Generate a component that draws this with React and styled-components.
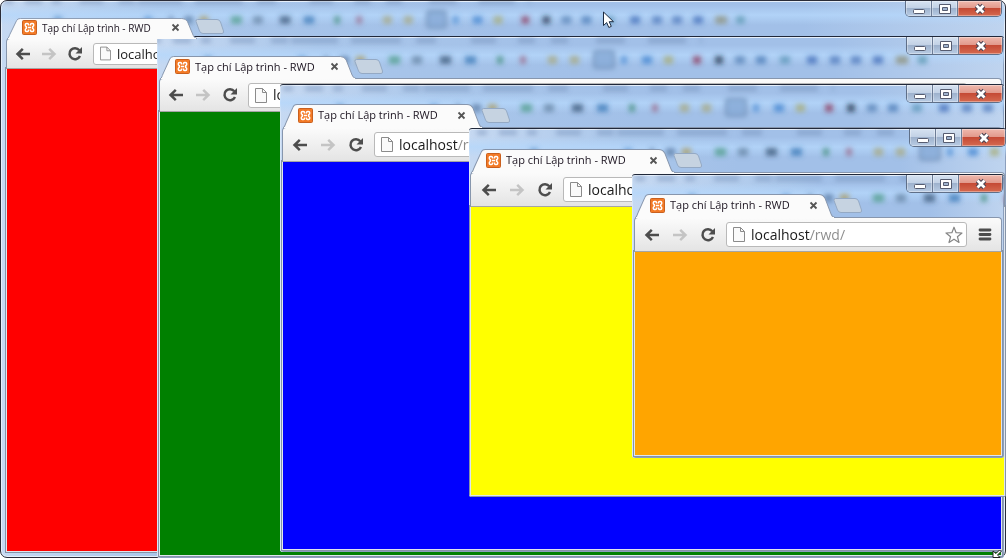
import React from 'react';
import styled, { createGlobalStyle, css } from 'styled-components';

const GlobalStyle = createGlobalStyle`
  * {
    box-sizing: border-box;
  }
  body {
    margin: 0;
    background: #fff;
    font-family: "Open Sans", "Noto Sans", sans-serif;
  }
`;

const sizes = {
  small: { strip: 37, toolbar: 31, tab: 190, tabHeight: 21, inset: 7, gap: 8, title: 10, address: 13, host: 55, field: 22, icon: 11 },
  medium: { strip: 41, toolbar: 34, tab: 196, tabHeight: 23, inset: 7, gap: 9, title: 11, address: 14, host: 59, field: 25, icon: 12 },
  normal: { strip: 42, toolbar: 35, tab: 200, tabHeight: 24, inset: 8, gap: 10, title: 11, address: 14, host: 59, field: 25, icon: 12 },
  large: { strip: 43, toolbar: 35, tab: 204, tabHeight: 24, inset: 9, gap: 10, title: 11, address: 14, host: 59, field: 25, icon: 12 },
};

const Desktop = styled.main`
  position: relative;
  min-height: 100vh;
  overflow: hidden;
`;

const Frame = styled.section`
  position: absolute;
  left: ${(props) => props.$left}px;
  top: ${(props) => props.$top}px;
  right: ${(props) => props.$right}px;
  bottom: ${(props) => props.$bottom}px;
  display: flex;
  flex-direction: column;
  padding: 0 ${(props) => props.$edge}px ${(props) => props.$edge}px;
  overflow: hidden;
  background: linear-gradient(90deg, #c6d9f2 0, #a9c6ea 160px, #a2c0e8 50%, #a2c0e8 80%, #bfd4ef 100%);
  border-top: 1px solid #20283a;
  border-radius: 3px;
  box-shadow: inset 0 1px #e6effa, inset 1px 0 #d8e6f7, inset -1px -1px #8c9fbd;
  ${(props) => props.$main && css`
    border: 1px solid #2a2c38;
    border-radius: 7px;
    box-shadow: inset 0 0 0 1px #e6effa;
  `}
`;

const Haze = styled.svg`
  position: absolute;
  left: 0;
  top: 0;
  width: 100%;
  height: 42px;
`;

const TitleStrip = styled.header`
  position: relative;
  display: flex;
  align-items: flex-end;
  flex: none;
  height: ${(props) => props.$size.strip}px;
`;

const Tab = styled.div`
  position: relative;
  display: flex;
  align-items: center;
  gap: 5px;
  width: ${(props) => props.$size.tab}px;
  height: ${(props) => props.$size.tabHeight}px;
  padding: 0 17px 2px 15px;
  margin-bottom: -1px;
  z-index: 1;
`;

const TabShape = styled.svg`
  position: absolute;
  left: 0;
  top: 0;
  width: 100%;
  height: 100%;
`;

const Favicon = styled.svg`
  position: relative;
  flex: none;
  width: 15px;
  height: 15px;
`;

const TabTitle = styled.span`
  position: relative;
  flex: 1;
  color: #1c1420;
  font-size: ${(props) => props.$size.title}px;
  line-height: 16px;
  white-space: nowrap;
`;

const IconButton = styled.button`
  position: relative;
  display: flex;
  align-items: center;
  justify-content: center;
  flex: none;
  width: ${(props) => props.$size}px;
  height: ${(props) => props.$size}px;
  padding: 0;
  border: 0;
  background: none;
`;

const NewTab = styled.button`
  position: relative;
  width: 30px;
  height: 15px;
  padding: 0;
  margin: 0 0 4px -2px;
  border: 0;
  background: none;

  svg {
    display: block;
  }
`;

const Controls = styled.div`
  position: absolute;
  top: 0;
  right: ${(props) => props.$offset}px;
  display: flex;
  height: ${(props) => (props.$compact ? 16 : 18)}px;
  border: 1px solid #5f6f88;
  border-top: 0;
  border-radius: 0 0 5px 5px;
  overflow: hidden;
`;

const Control = styled.button`
  display: flex;
  align-items: center;
  justify-content: center;
  width: ${(props) => (props.$close ? 43 : 26)}px;
  padding: 0;
  border: 0;
  border-right: ${(props) => (props.$close ? 0 : 1)}px solid #6c7c96;
  background: ${(props) => (props.$close
    ? 'linear-gradient(#efb9ae 0, #e29a8c 45%, #c54a35 50%, #d56a50 100%)'
    : 'linear-gradient(#d6e2f1 0, #c3d2e6 45%, #9eb2cd 50%, #b9cce4 100%)')};
  box-shadow: inset 0 0 0 1px rgba(255, 255, 255, 0.35);
`;

const Toolbar = styled.div`
  display: flex;
  align-items: center;
  flex: none;
  height: ${(props) => props.$size.toolbar}px;
  margin: 0 -1px;
  padding: 0 7px 0 ${(props) => props.$size.inset}px;
  position: relative;
  background: linear-gradient(#fbfbfb, #e4e4e4);
  border: 1px solid #8796ad;
  border-bottom-color: #a5a5a5;
  border-radius: 4px 4px 0 0;
`;

const Nav = styled.nav`
  display: flex;
  gap: ${(props) => props.$size.gap}px;
`;

const Omnibox = styled.label`
  display: flex;
  align-items: center;
  flex: 1;
  gap: 6px;
  min-width: 0;
  height: ${(props) => props.$size.field}px;
  margin: 0 9px;
  padding: 0 3px 0 6px;
  background: #fff;
  border: 1px solid #b9b9b9;
  border-radius: 3px;
`;

// the host is dark, the path after it is grey
const Address = styled.input`
  flex: 1;
  min-width: 0;
  height: 20px;
  padding: 0;
  border: 0;
  outline: 0;
  color: transparent;
  background: linear-gradient(90deg, #1a1a1a ${(props) => props.$size.host}px, #8a8a8a ${(props) => props.$size.host}px);
  background-clip: text;
  -webkit-background-clip: text;
  font-family: inherit;
  font-size: ${(props) => props.$size.address}px;
  line-height: 20px;
`;

const Page = styled.div`
  flex: 1;
  background: ${(props) => props.$color};
  box-shadow: 0 0 0 1px #dfe6ee, 0 0 0 2px #8593a8;
`;

const Cursor = styled.svg`
  position: absolute;
  left: 602px;
  top: 11px;
`;

const ResizeCursor = styled.svg`
  position: absolute;
  right: 2px;
  bottom: 0;
`;

const words = [
  [3, 10], [25, 18], [53, 10], [82, 25], [123, 17], [143, 47], [203, 50], [268, 20],
  [323, 25], [370, 17], [403, 17], [448, 29], [500, 38], [552, 2],
];

const marks = [
  [56, 8, '#5f96cf'], [150, 8, '#5d97d6'], [176, 4, '#57779f'], [192, 9, '#57779f'], [208, 9, '#ad9a5c'],
  [241, 11, '#4a9a83'], [264, 10, '#63809f'], [292, 11, '#33506f'], [317, 11, '#3374b4'],
  [349, 6, '#3f8c77'], [372, 6, '#9a6685'], [400, 9, '#a8a577'], [422, 9, '#a8a577'],
  [473, 6, '#4c8dd4'], [494, 10, '#3c80cf'], [516, 9, '#a8a96c'],
  [545, 8, '#8c3456'], [567, 8, '#1d3147'], [587, 10, '#547fb3'], [608, 10, '#4777b4'],
  [632, 10, '#5a93b5'], [659, 10, '#3a68b5'], [682, 10, '#4a74b8'], [703, 10, '#4a74b8'],
  [725, 10, '#3a68b5'], [748, 12, '#8b8c70'], [770, 9, '#5795ae'],
];

const Backdrop = ({ id, shift, compact }) => (
  <Haze aria-hidden="true">
    <defs>
      <filter id={id} x="-10%" y="-50%" width="120%" height="200%">
        <feGaussianBlur stdDeviation="2.8" />
      </filter>
      <linearGradient id={`${id}-band`} x1="0" y1="0" x2="0" y2="1">
        <stop offset="0" stopColor="#b5d7fb" stopOpacity="0" />
        <stop offset="0.5" stopColor="#b5d7fb" stopOpacity="0.8" />
        <stop offset="1" stopColor="#b5d7fb" stopOpacity="0" />
      </linearGradient>
    </defs>
    <rect y={compact ? 4 : 8} width="100%" height="20" fill={`url(#${id}-band)`} />
    <g filter={`url(#${id})`} transform={compact ? 'translate(0 -3) scale(0.955)' : `translate(${shift} 0)`}>
      {words.map(([x, w]) => (
        <rect key={x} x={x} y="1" width={w} height="5" fill="#6f8cb4" opacity="0.5" />
      ))}
      {marks.map(([x, w, fill]) => (
        <rect key={x} x={x} y="19" width={w} height="8" fill={fill} opacity="0.7" />
      ))}
      <rect x="446" y="14" width="20" height="17" rx="3" fill="#86a9d6" stroke="#6583ab" strokeWidth="2" opacity="0.8" />
    </g>
  </Haze>
);

const CloseX = () => (
  <svg width="14" height="12" viewBox="0 0 14 12">
    <path d="M3.500 2.500 10.500 9.500M10.500 2.500 3.500 9.500" stroke="#4b4453" strokeWidth="5" />
    <path d="M3.500 2.500 10.500 9.500M10.500 2.500 3.500 9.500" stroke="#fff" strokeWidth="2.800" />
  </svg>
);

const BrowserWindow = ({ id, box, edge, color, size = sizes.normal, main, shift = 0, controls = 1 }) => (
  <Frame $left={box[0]} $top={box[1]} $right={box[2]} $bottom={box[3]} $edge={edge} $main={main}>
    <Backdrop id={id} shift={shift} compact={main} />
    <TitleStrip $size={size}>
      <Tab $size={size}>
        <TabShape viewBox="0 0 200 23" preserveAspectRatio="none" aria-hidden="true">
          <path
            d="M0 23C2 22 2 20 3 18L10 3Q11 .5 14 .5H184Q188 .5 190 4L196 19Q197 22 200 22.500V23Z"
            fill="#fbfbfb"
            stroke="#8796ad"
          />
          <path d="M1 23H199" stroke="#fbfbfb" strokeWidth="2" />
        </TabShape>
        <Favicon viewBox="0 0 15 15" aria-hidden="true">
          <rect x=".5" y=".5" width="14" height="14" rx="1" fill="#f37a26" stroke="#c9601f" />
          <path
            d="M6.500 5.500V4.600Q6.500 3.600 5.300 3.600H4.500Q3.300 3.600 3.300 4.800V5.200Q3.300 6.200 4.300 6.700V8.300Q3.300 8.800 3.300 9.800V10.200Q3.300 11.400 4.500 11.400H5.300Q6.500 11.400 6.500 10.400V9.500M8.500 5.500V4.600Q8.500 3.600 9.700 3.600H10.500Q11.700 3.600 11.700 4.800V5.200Q11.700 6.200 10.700 6.700V8.300Q11.700 8.800 11.700 9.800V10.200Q11.700 11.400 10.500 11.400H9.700Q8.500 11.400 8.500 10.400V9.500M5.800 7.500H9.200"
            fill="none"
            stroke="#fff"
            strokeWidth="1.500"
          />
        </Favicon>
        <TabTitle $size={size}>Tạp chí Lập trình - RWD</TabTitle>
        <IconButton $size={9} aria-label="Close tab">
          <svg width="9" height="9" viewBox="0 0 9 9">
            <path d="M1.500 1.500 7.500 7.500M7.500 1.500 1.500 7.500" stroke="#555" strokeWidth="1.800" />
          </svg>
        </IconButton>
      </Tab>
      <NewTab aria-label="New tab">
        <svg width="30" height="15" viewBox="0 0 30 15">
          <path
            d="M2.500 .5H22Q24.500 .5 25.500 3L28.500 12Q29 14.500 27 14.500H8Q5.500 14.500 4.500 12L1 2.500Q.5 .5 2.500 .5Z"
            fill="#c6d3e1"
            stroke="#94a9c4"
          />
        </svg>
      </NewTab>
      <Controls $compact={main} $offset={controls - edge}>
        <Control aria-label="Minimize">
          <svg width="12" height="10" viewBox="0 0 12 10">
            <rect x=".5" y="5.500" width="11" height="4" rx="1" fill="#fff" stroke="#565c70" />
          </svg>
        </Control>
        <Control aria-label="Maximize">
          <svg width="12" height="10" viewBox="0 0 12 10">
            <path
              d="M.5 .5H11.500V9.500H.5ZM3.500 3.500V6.500H8.500V3.500Z"
              fill="#fff"
              fillRule="evenodd"
              stroke="#565c70"
            />
          </svg>
        </Control>
        <Control $close aria-label="Close">
          <CloseX />
        </Control>
      </Controls>
    </TitleStrip>
    <Toolbar $size={size}>
      <Nav $size={size}>
        <IconButton $size={18} aria-label="Back">
          <svg width="16" height="14" viewBox="0 0 16 14">
            <path d="M15 7H3M7.800 1.800 2.500 7 7.800 12.200" fill="none" stroke="#4d4d4d" strokeWidth="2.500" />
          </svg>
        </IconButton>
        <IconButton $size={18} aria-label="Forward">
          <svg width="16" height="14" viewBox="0 0 16 14">
            <path d="M1 7H13M8.200 1.800 13.500 7 8.200 12.200" fill="none" stroke="#c4c4c4" strokeWidth="2.500" />
          </svg>
        </IconButton>
        <IconButton $size={18} aria-label="Reload">
          <svg width="16" height="16" viewBox="0 0 16 16">
            <path d="M12.300 4.200A5.500 5.500 0 1 0 13 10" fill="none" stroke="#4d4d4d" strokeWidth="2.500" />
            <path d="M15 1V7.500H8.500Z" fill="#4d4d4d" />
          </svg>
        </IconButton>
      </Nav>
      <Omnibox $size={size}>
        <svg width={size.icon} height="15" viewBox="0 0 12 15" aria-hidden="true">
          <path d="M.5 .5H7.500L11.500 4.500V14.500H.5Z" fill="#fafafa" stroke="#8b8b8b" />
          <path d="M7.500 .5V4.500H11.500" fill="none" stroke="#8b8b8b" />
        </svg>
        <Address
          aria-label="Address"
          defaultValue="localhost/rwd/"
          spellCheck={false}
          $size={size}
        />
        <IconButton $size={18} aria-label="Bookmark this page">
          <svg width="18" height="18" viewBox="0 0 18 18">
            <path
              d="M9 1.200 11.100 6.700 17 7 12.400 10.700 14 16.500 9 13.200 4 16.500 5.600 10.700 1 7 6.900 6.700Z"
              fill="#fff"
              stroke="#858585"
              strokeWidth="1.200"
              strokeLinejoin="round"
            />
          </svg>
        </IconButton>
      </Omnibox>
      <IconButton $size={18} aria-label="Menu">
        <svg width="14" height="13" viewBox="0 0 14 13">
          <path d="M2 2H12M2 6.500H12M2 11H12" stroke="#4d4d4d" strokeWidth="2.800" strokeLinecap="round" />
        </svg>
      </IconButton>
    </Toolbar>
    <Page $color={color} />
  </Frame>
);

const App = () => (
  <>
    <GlobalStyle />
    <Desktop>
      <BrowserWindow id="haze-1" box={[0, 0, 0, 0]} edge={6} color="#ff0000" size={sizes.small} controls={3} main />
      <BrowserWindow id="haze-2" box={[157, 36, 2, 0]} edge={3} color="#008000" size={sizes.medium} shift={-9} />
      <BrowserWindow id="haze-3" box={[280, 84, 2, 6]} edge={3} color="#0000ff" />
      <BrowserWindow id="haze-4" box={[469, 128, 0, 61]} edge={2} color="#ffff00" size={sizes.large} shift={5} controls={0} />
      <BrowserWindow id="haze-5" box={[632, 174, 2, 100]} edge={3} color="#ffa500" />
      <Cursor width="13" height="18" viewBox="0 0 13 18" aria-hidden="true">
        <path
          d="M1.500 1V14.500L4.700 11.600 6.800 16.500 9.300 15.400 7.200 10.700H11.500Z"
          fill="#fff"
          stroke="#1c2a40"
        />
      </Cursor>
      <ResizeCursor width="12" height="9" viewBox="0 0 12 9" aria-hidden="true">
        <path d="M1 2V8.500H8L5.500 6 9 2.500 7.500 1 4 4.500Z" fill="#fff" stroke="#222" />
      </ResizeCursor>
    </Desktop>
  </>
);

export default App;
